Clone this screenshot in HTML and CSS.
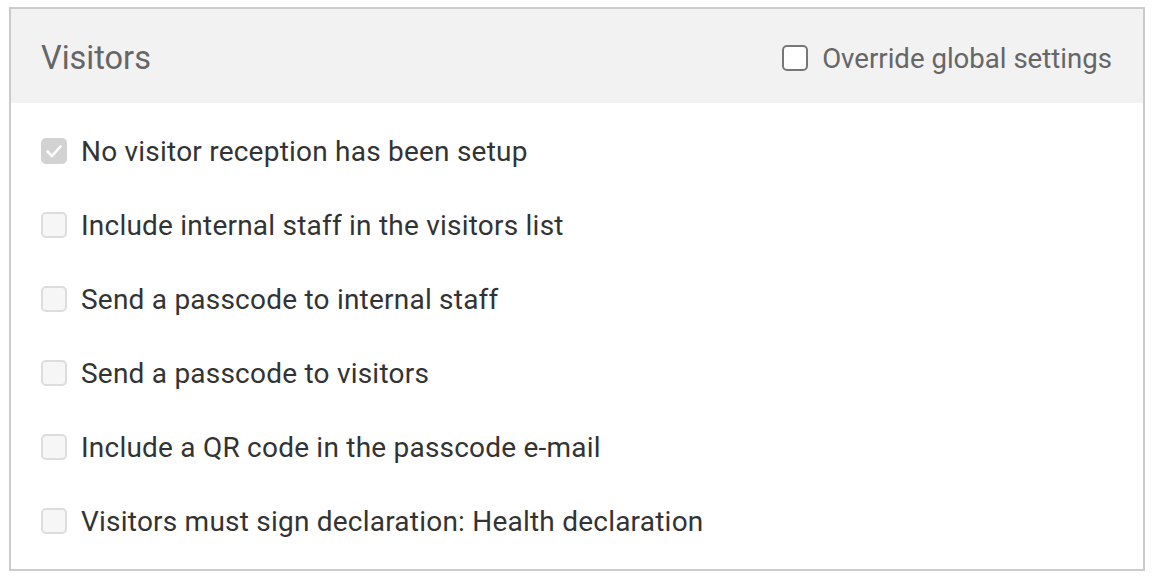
FILE: index.html
```html
<!DOCTYPE html>
<html>
<head>
<meta charset="utf-8">
<link rel="stylesheet" href="styles.css">
</head>
<body>
<section class="panel">
  <header class="panel-head">
    <h2 class="panel-title">Visitors</h2>
    <label class="override">
      <span class="box box-outline"></span>
      <span>Override global settings</span>
    </label>
  </header>
  <div class="panel-body">
    <label class="row">
      <span class="box box-checked">
        <svg viewBox="0 0 26 26" width="26" height="26"><path d="M6.5 13.5 L11 18 L19.5 8.5" fill="none" stroke="#fff" stroke-width="2.6" stroke-linecap="round" stroke-linejoin="round"/></svg>
      </span>
      <span>No visitor reception has been setup</span>
    </label>
    <label class="row"><span class="box box-disabled"></span><span>Include internal staff in the visitors list</span></label>
    <label class="row"><span class="box box-disabled"></span><span>Send a passcode to internal staff</span></label>
    <label class="row"><span class="box box-disabled"></span><span>Send a passcode to visitors</span></label>
    <label class="row"><span class="box box-disabled"></span><span>Include a QR code in the passcode e-mail</span></label>
    <label class="row"><span class="box box-disabled"></span><span>Visitors must sign declaration: Health declaration</span></label>
  </div>
</section>
</body>
</html>
```

FILE: styles.css
```css
html, body {
  margin: 0;
  padding: 0;
  background: #fff;
}
body {
  font-family: Roboto, "Liberation Sans", sans-serif;
  padding: 7px 9px 0 9px;
}
.panel {
  width: 1136px;
  box-sizing: border-box;
  border: 2px solid #cccccc;
  background: #fff;
}
.panel-head {
  height: 94px;
  background: #f2f2f2;
  display: flex;
  align-items: center;
  justify-content: space-between;
  padding: 4px 31px 0 30px;
  box-sizing: border-box;
}
.panel-title {
  margin: 0;
  font-size: 32.5px;
  font-weight: 400;
  color: #666666;
}
.override {
  display: flex;
  align-items: center;
  gap: 14px;
  font-size: 27.6px;
  color: #666666;
}
.box {
  width: 26px;
  height: 26px;
  box-sizing: border-box;
  border-radius: 5px;
  flex: none;
  display: flex;
}
.box-outline {
  border: 2px solid #777777;
  background: #fff;
}
.box-disabled {
  border: 2px solid #dddddd;
  background: #f6f6f6;
}
.box-checked {
  background: #d2d2d2;
}
.panel-body {
  padding: 11px 30px 11px 30px;
}
.row {
  height: 74px;
  display: flex;
  align-items: center;
  gap: 14px;
  font-size: 28px;
  letter-spacing: 0.22px;
  color: #333333;
}
```
